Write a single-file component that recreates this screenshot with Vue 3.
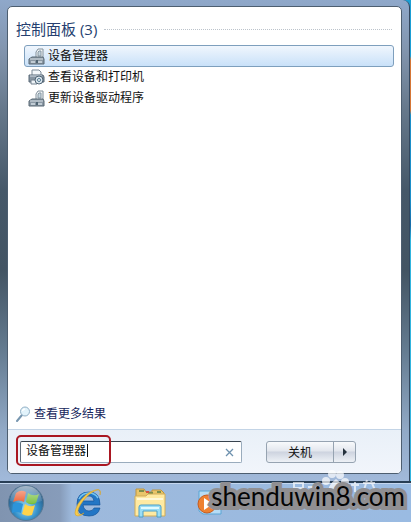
<template>
  <div class="desktop">
    <div class="start-menu">
      <main class="panel">
        <section class="results">
          <h2 class="group-title">
            <span>控制面板 ({{ items.length }})</span>
          </h2>
          <ul class="result-list">
            <li v-for="item in items" :key="item.label">
              <button class="result" :class="{ selected: item.label === selected }" @click="selected = item.label">
                <svg v-if="item.icon === 'printer'" width="17" height="17" viewBox="0 0 17 17">
                  <path d="M4 1h7l2 2v4H4z" fill="#f4f8fb" stroke="#7d8b98" />
                  <path d="M1 6h14l1 2v5H1z" fill="#8795a2" stroke="#596876" />
                  <path d="M2 7h12" stroke="#d5dee6" />
                  <path d="M3 11h6v4H3z" fill="#eef3f7" stroke="#74828f" />
                  <circle cx="11" cy="11" r="4" fill="#d9e4ec" stroke="#4f6474" />
                  <circle cx="11" cy="11" r="1.5" fill="#fff" stroke="#4f7890" />
                </svg>
                <svg v-else width="17" height="17" viewBox="0 0 17 17">
                  <path d="M8 10V4l2-3h5v9z" fill="#f2f6f8" stroke="#82909b" />
                  <path d="M10 8V4l1-1h2v5z" fill="#c5d6df" stroke="#8796a2" />
                  <path d="M1 11l3-2h11l1 2v5H1z" fill="#8b98a4" stroke="#596875" />
                  <path d="M2 11h13" stroke="#d7e0e6" />
                  <path d="M3 14h4M10 14h4" stroke="#d4dde4" stroke-width="1.5" />
                  <path d="M8 12h2v3H8z" fill="#4f6472" />
                </svg>
                <span>{{ item.label }}</span>
              </button>
            </li>
          </ul>
          <a class="more" href="#" @click.prevent>
            <svg width="15" height="16" viewBox="0 0 15 16">
              <path d="M6 9L1 15" stroke="#7897b0" stroke-width="2" stroke-linecap="round" />
              <circle cx="9" cy="5.5" r="4.5" fill="#e2f3fb" stroke="#91afc5" />
              <path d="M6.5 5a2.5 2.5 0 0 1 2.5-2" fill="none" stroke="#fff" stroke-width="1.5" />
            </svg>
            <span>查看更多结果</span>
          </a>
        </section>

        <footer class="footer">
          <div class="search">
            <input v-model="query" type="text" aria-label="搜索" />
            <span class="caret"></span>
            <span class="highlight"></span>
            <button class="clear" aria-label="清除" @click="query = ''">
              <svg width="9" height="9" viewBox="0 0 9 9">
                <path d="M1 1l7 7M8 1L1 8" stroke="#6d91ae" stroke-width="1.3" />
              </svg>
            </button>
          </div>
          <div class="power">
            <button class="shutdown">关机</button>
            <button class="power-more" aria-label="更多">
              <svg width="6" height="8" viewBox="0 0 6 8">
                <path d="M1 0l4 4-4 4z" fill="#25313d" />
              </svg>
            </button>
          </div>
        </footer>
      </main>
    </div>

    <nav class="taskbar">
      <button class="task start" aria-label="开始">
        <svg width="38" height="38" viewBox="0 0 38 38">
          <defs>
            <radialGradient id="orb" cx="50%" cy="65%" r="60%">
              <stop offset="0" stop-color="#a8e2f5" />
              <stop offset="0.55" stop-color="#3792ca" />
              <stop offset="1" stop-color="#28557e" />
            </radialGradient>
            <linearGradient id="gloss" x2="0" y2="1">
              <stop offset="0" stop-color="#fff" stop-opacity="0.6" />
              <stop offset="1" stop-color="#fff" stop-opacity="0.05" />
            </linearGradient>
          </defs>
          <circle cx="19" cy="19" r="17.5" fill="url(#orb)" stroke="#577894" />
          <path d="M9 9q5-4 10-1l-2 10q-5-3-11 0z" fill="#ec5a2c" />
          <path d="M21 9q5 4 11 1l-3 9q-5 3-10-1z" fill="#79c03d" />
          <path d="M6 20q5-3 10 0l-2 9q-5-2-9 0z" fill="#2c94da" />
          <path d="M18 20q5 4 10 1l-3 10q-5 2-10-1z" fill="#ffd34a" />
          <path d="M3 17a16 15 0 0 1 32 0q-16 5-32 0z" fill="url(#gloss)" />
        </svg>
      </button>
      <button class="task ie" aria-label="Internet Explorer">
        <svg width="32" height="32" viewBox="0 0 32 32">
          <path
            d="M28 18H11q1 6 6 6 4 0 5-3h6q-2 8-11 8Q5 29 5 17 5 5 17 5q11 0 11 13zM11 14h11q-1-5-5-5-5 0-6 5z"
            fill="#2376c5" stroke="#155599" stroke-width="0.7" fill-rule="evenodd" />
          <path d="M7 12q3-6 10-6 6 0 9 5" fill="none" stroke="#76c4ee" stroke-width="1.5" />
          <path d="M28 8q2-7-5-5Q13 6 6 17q-6 12 0 12 3 0 6-3-5 3-6 0-1-4 5-12 7-9 14-11 4-1 3 5z"
            fill="#f6cb4d" stroke="#d5a22d" stroke-width="0.6" />
        </svg>
      </button>
      <button class="task explorer" aria-label="资源管理器">
        <svg width="34" height="32" viewBox="0 0 34 32">
          <path d="M3 5V2h8l2 3h6V3h9l3 3v22H3z" fill="#e9c66a" stroke="#bd9440" />
          <path d="M6 4h5M15 6h5M24 5h4" stroke="#7d8f4c" stroke-width="2" />
          <path d="M13 5h3" stroke="#d6533f" stroke-width="2" />
          <path d="M2 9h11l2-2h17v22H2z" fill="#ffeaa2" stroke="#d0ac59" />
          <path d="M4 12h26" stroke="#fff9da" stroke-width="2" />
          <path d="M6 30V20q0-2 2-2h18q2 0 2 2v10h-4v-6H10v6z" fill="#9bddf4" stroke="#4b9fc9" />
          <path d="M8 21h18" stroke="#e1faff" stroke-width="2" />
        </svg>
      </button>
      <button class="task player" aria-label="播放器">
        <svg width="26" height="28" viewBox="0 0 26 28">
          <path d="M2 2h18l4 3v20H6l-4-3z" fill="#b7dcf5" stroke="#5aa5d4" />
          <circle cx="10" cy="15" r="9" fill="#ee8130" stroke="#c65b21" />
          <path d="M7 9l9 6-9 6z" fill="#fff" />
        </svg>
      </button>
    </nav>

    <div class="watermark">
      <span>shenduwin8.com</span>
      <svg class="paw" width="90" height="32" viewBox="0 0 90 32">
        <g fill="#fff" opacity="0.7">
          <ellipse cx="35" cy="11" rx="4" ry="4" />
          <ellipse cx="41" cy="4" rx="4" ry="4" />
          <ellipse cx="49" cy="5" rx="4" ry="4" />
          <ellipse cx="54" cy="12" rx="4" ry="4" />
          <path d="M45 9q9 7 7 12-7 3-14 0-2-5 7-12z" />
        </g>
        <path d="M3 13h9v5H3zM17 17h8M60 15h8M64 12v10M72 13h12M76 10l-3 10M80 11l4 9" fill="none" stroke="#fff"
          stroke-width="2" opacity="0.65" />
      </svg>
    </div>
  </div>
</template>

<script setup>
import { ref } from 'vue';

const items = [
  { label: '设备管理器', icon: 'device' },
  { label: '查看设备和打印机', icon: 'printer' },
  { label: '更新设备驱动程序', icon: 'device' }
];

const selected = ref('设备管理器');
const query = ref('设备管理器');
</script>

<style>
body {
  margin: 0;
}
</style>

<style scoped>
.desktop {
  position: relative;
  box-sizing: border-box;
  display: flex;
  flex-direction: column;
  min-height: 100vh;
  overflow: hidden;
  background: linear-gradient(#1b9fd5 0 56px, #d57636 60px 110px, #1b8fc9 115px 200px, #176ba7 225px, #30b5df 240px);
  font-family: "Liberation Sans", "Noto Sans CJK SC", sans-serif;
  font-size: 12px;
  color: #111;
}

button,
input {
  font: inherit;
  color: inherit;
}

button {
  margin: 0;
  padding: 0;
  border: none;
  background: none;
}

.start-menu {
  flex: 1;
  display: flex;
  margin-right: 1px;
  padding: 6px 7px 7px;
  border-right: 1px solid #34475e;
  border-radius: 0 7px 0 0;
  background: linear-gradient(#8fa8ca, #8295ae 50px, #66788b 110px, #465869 190px, #435463 270px, #647b90 350px, #91a9c6 430px, #a1b9da);
}

.panel {
  flex: 1;
  display: flex;
  flex-direction: column;
  min-width: 0;
  overflow: hidden;
  border: 1px solid #4d5e70;
  border-radius: 5px;
  background: #fff;
}

.results {
  flex: 1;
  display: flex;
  flex-direction: column;
  padding: 12px 7px 6px 8px;
}

.group-title {
  display: flex;
  align-items: center;
  gap: 7px;
  margin: 0 2px 5px 0;
  font-family: "Open Sans", "Noto Sans CJK SC", sans-serif;
  font-size: 15px;
  font-weight: 400;
  line-height: 21px;
  color: #263f70;
}

.group-title::after {
  content: "";
  flex: 1;
  border-top: 1px dotted #bcc3cb;
}

.result-list {
  margin: 0 0 0 8px;
  padding: 0;
  list-style: none;
}

.result {
  display: flex;
  align-items: center;
  gap: 3px;
  box-sizing: border-box;
  width: 100%;
  height: 21px;
  padding: 0 3px;
  border: 1px solid transparent;
  border-radius: 3px;
  line-height: 19px;
}

.result.selected {
  height: 22px;
  border-color: #7e9fbd;
  background: linear-gradient(#f0f6fd, #c9e1f9);
}

.more {
  display: flex;
  align-items: center;
  gap: 3px;
  margin-top: auto;
  line-height: 18px;
  color: #17265c;
  text-decoration: none;
}

.footer {
  display: flex;
  align-items: center;
  gap: 24px;
  height: 43px;
  padding: 0 45px 0 12px;
  border-top: 1px solid #c3d4e6;
  background: linear-gradient(#e9f0f8, #f1f5fb);
}

.search {
  position: relative;
  flex: 1;
  display: flex;
  height: 22px;
}

.search input {
  flex: 1;
  min-width: 0;
  box-sizing: border-box;
  padding: 0 24px 4px 5px;
  border: 1px solid #9aacbd;
  border-top-color: #38434e;
  border-left-color: #5d6b78;
  border-radius: 2px;
  outline: none;
  background: #fff;
}

.caret {
  position: absolute;
  top: 3px;
  left: 67px;
  width: 1px;
  height: 13px;
  background: #111;
}

.highlight {
  position: absolute;
  top: -6px;
  left: -4px;
  box-sizing: border-box;
  width: 95px;
  height: 31px;
  border: 2px solid #a91722;
  border-radius: 5px;
  pointer-events: none;
}

.clear {
  position: absolute;
  top: 5px;
  right: 8px;
  display: flex;
  padding: 2px 0;
}

.power {
  display: flex;
  box-sizing: border-box;
  height: 22px;
  border: 1px solid #96a3b1;
  border-radius: 3px;
  background: linear-gradient(#f8fafc, #e2e6ed 45%, #cdd3df 50%, #edf1f6);
}

.shutdown {
  width: 66px;
}

.power-more {
  display: flex;
  align-items: center;
  justify-content: center;
  width: 22px;
  border-left: 1px solid #96a3b1;
}

.taskbar {
  display: flex;
  align-items: center;
  height: 39px;
  border-top: 2px solid #283e55;
  background: linear-gradient(90deg, #8094b0, #879cba 60px, #9db9dc 72px, #9abbe2);
  box-shadow: inset 0 1px #c4d7ef;
}

.task {
  display: flex;
  align-items: center;
  justify-content: center;
}

.start {
  width: 52px;
}

.ie {
  width: 72px;
}

.explorer {
  width: 52px;
}

.player {
  width: 68px;
}

/* site mark lying over the menu and the taskbar */
.watermark {
  position: absolute;
  right: 6px;
  bottom: 8px;
  font-family: Lato, sans-serif;
  font-size: 26px;
  line-height: 36px;
  color: #050505;
  pointer-events: none;
}

.watermark span {
  position: relative;
  z-index: 1;
  -webkit-text-stroke: 8px #908f92;
  paint-order: stroke fill;
}

.paw {
  position: absolute;
  right: 24px;
  bottom: 12px;
}
</style>
